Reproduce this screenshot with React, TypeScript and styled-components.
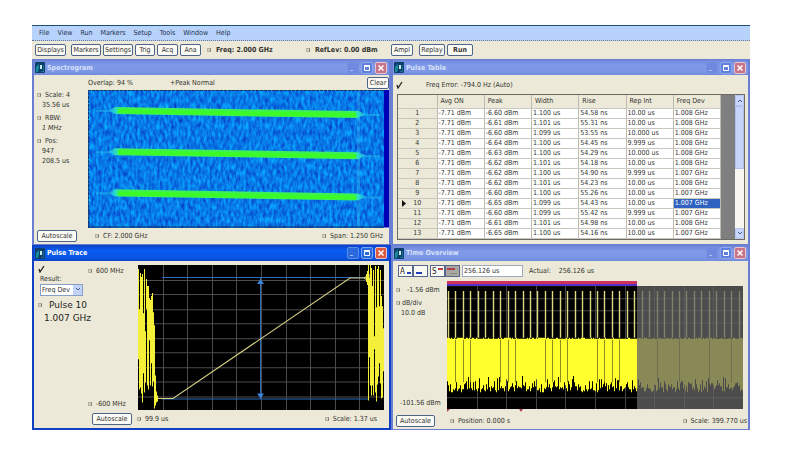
import React from "react";
import styled, { createGlobalStyle, css } from "styled-components";

const GlobalStyle = createGlobalStyle`
  * { box-sizing: border-box; }
  body { margin: 0; background: #fff; }
  body, button, input, select, table {
    font-family: "DejaVu Sans Condensed", "DejaVu Sans", sans-serif;
    font-size: 7px;
    line-height: 10px;
    color: #33332f;
  }
`;

const beige = "#ece9d8";

const Shell = styled.main`
  display: flex;
  flex-direction: column;
  margin: 25px 42px 42px 32px;
  height: calc(100vh - 67px);
  min-height: 405px;
  background: ${beige};
  border-top: 1px solid #1d4f70;
`;

const MenuBar = styled.nav`
  display: flex;
  align-items: center;
  flex: none;
  gap: 8px;
  height: 15px;
  padding-left: 7px;
  background: #b8d3fb;
  border-bottom: 1px dotted #68758c;
`;

const MenuItem = styled.button`
  padding: 0;
  border: 0;
  background: none;
  color: #1f2f4c;
`;

const Toolbar = styled.div`
  display: flex;
  align-items: center;
  flex: none;
  height: 18px;
  padding-left: 3px;
`;

const ToolGroup = styled.div<{ $before?: number }>`
  display: flex;
  gap: 2px;
  margin-left: ${(p) => p.$before ?? 0}px;
`;

const PushButton = styled.button<{ $width: number; $bold?: boolean }>`
  width: ${(p) => p.$width}px;
  height: 12px;
  padding: 0;
  border: 1px solid #4d6489;
  border-radius: 2px;
  background: #fbfaf5;
  line-height: 10px;
  white-space: nowrap;
  flex: none;
  font-weight: ${(p) => (p.$bold ? 700 : 400)};
`;

const Readout = styled.div<{ $width: number }>`
  display: flex;
  align-items: center;
  gap: 5px;
  width: ${(p) => p.$width}px;
  font-weight: 700;
  white-space: nowrap;
`;

const Workspace = styled.div`
  flex: 1;
  min-height: 0;
  display: grid;
  grid-template-columns: 1fr 1fr;
  grid-template-rows: 1fr 1fr;
`;

const Pane = styled.section<{ $active?: boolean }>`
  display: flex;
  flex-direction: column;
  min-width: 0;
  min-height: 0;
  background: ${beige};
  border: 2px solid ${(p) => (p.$active ? "#1040c4" : "#6a7fd2")};
  border-top-width: 1px;
  border-bottom-width: ${(p) => (p.$active ? 2 : 1)}px;
`;

const TitleBar = styled.header<{ $active?: boolean }>`
  display: flex;
  align-items: center;
  flex: none;
  gap: 2px;
  height: 15px;
  padding: 0 2px 0 1px;
  color: ${(p) => (p.$active ? "#fff" : "#d6e0fa")};
  background: ${(p) =>
    p.$active
      ? "linear-gradient(#0b49d0, #0a5cf0 30%, #0755e6 80%, #0a43c0)"
      : "linear-gradient(#6f88dc, #809ae8 35%, #7c97e6 80%, #7089da)"};
`;

const Title = styled.h2`
  flex: 1;
  margin: 0;
  font-size: 7px;
  line-height: 12px;
  font-weight: 700;
`;

type Tone = "minimize" | "maximize" | "close";

const captionFill = (tone: Tone, active?: boolean) => {
  if (tone === "close") return active ? "#dc5a3c" : "#c67486";
  if (tone === "minimize") return active ? "#2a68de" : "#7089e0";
  return active ? "#2a68de" : "#5f80dc";
};

const captionEdge = (tone: Tone, active?: boolean) => {
  if (tone === "close") return "#e9c3cf";
  if (tone === "minimize") return active ? "#5c8ce8" : "#7790e2";
  return active ? "#7ba4ee" : "#8ea6ea";
};

const CaptionButton = styled.button<{ $tone: Tone; $active?: boolean }>`
  width: 12px;
  height: 12px;
  padding: 0;
  display: grid;
  place-items: center;
  border: 1px solid ${(p) => captionEdge(p.$tone, p.$active)};
  border-radius: 2px;
  background: ${(p) => captionFill(p.$tone, p.$active)};
`;

const Mark = styled.span`
  display: inline-block;
  flex: none;
  width: 4px;
  height: 4px;
  border: 1px solid #b5b2a4;
  border-right-color: #7f7c72;
  background: #d7d3c2;
`;

function Caption({ title, active }: { title: string; active?: boolean }) {
  return (
    <TitleBar $active={active}>
      <svg width="10" height="11" viewBox="0 0 10 11" aria-hidden="true">
        <rect width="10" height="11" rx="1" fill="#0c3f6c" />
        <path d="M1 10V5l3-3v4l-1 4z" fill="#1a8c98" />
        <path d="M5 3h2v4H5z" fill="#c9eef0" />
        <path d="M8 3h1v7H6V9h2z" fill="#18708c" />
      </svg>
      <Title>{title}</Title>
      <CaptionButton $tone="minimize" $active={active} aria-label="Minimize">
        <svg width="8" height="8"><path d="M1 6.5h3" stroke="#a9c0f5" /></svg>
      </CaptionButton>
      <CaptionButton $tone="maximize" $active={active} aria-label="Maximize">
        <svg width="8" height="8">
          <path d="M1.500 2.500h5v4h-5z" fill="none" stroke="#fff" />
          <path d="M1 1.500h6" stroke="#fff" />
        </svg>
      </CaptionButton>
      <CaptionButton $tone="close" $active={active} aria-label="Close">
        <svg width="8" height="8"><path d="M1.500 1.500l5 5m0-5l-5 5" stroke="#fff" strokeWidth="1.500" /></svg>
      </CaptionButton>
    </TitleBar>
  );
}

const Body = styled.div`
  flex: 1;
  min-height: 0;
  display: flex;
`;

const Column = styled.div<{ $right?: number }>`
  flex: 1;
  min-width: 0;
  min-height: 0;
  display: flex;
  flex-direction: column;
  padding-right: ${(p) => p.$right ?? 0}px;
`;

const Plot = styled.svg`
  display: block;
  flex: 1 1 0;
  min-height: 0;
  width: 100%;
`;

const Strip = styled.div<{ $height: number }>`
  display: flex;
  align-items: center;
  flex: none;
  height: ${(p) => p.$height}px;
  white-space: nowrap;
`;

const Footer = styled(Strip)<{ $left: number; $right: number; $gap: number }>`
  gap: ${(p) => p.$gap}px;
  padding: 0 ${(p) => p.$right}px 0 ${(p) => p.$left}px;
`;

const Tagged = styled.span<{ $push?: boolean; $gap?: number }>`
  display: flex;
  align-items: center;
  gap: ${(p) => p.$gap ?? 4}px;
  white-space: nowrap;
  ${(p) => p.$push && css`margin-left: auto;`}
`;

const Side = styled.aside<{ $width: number; $top: number }>`
  flex: none;
  width: ${(p) => p.$width}px;
  padding: ${(p) => p.$top}px 0 0 3px;
  white-space: nowrap;
`;

const Setting = styled.div`
  margin-bottom: 3px;
  & > p { margin: 0 0 0 5px; }
`;

const Check = () => (
  <svg width="7" height="8" viewBox="0 0 7 8" aria-label="Valid">
    <path d="M1 4l1 3L6 1" fill="none" stroke="#222" strokeWidth="1.300" />
  </svg>
);

/* ---------- Spectrogram ---------- */

const SpecStrip = styled(Strip)`
  gap: 37px;
  & > button { margin-left: auto; }
`;

function Spectrogram() {
  return (
    <Pane>
      <Caption title="Spectrogram" />
      <Body>
        <Side $width={54} $top={15}>
          <Setting><Tagged><Mark />Scale: 4</Tagged><p>35.56 us</p></Setting>
          <Setting><Tagged><Mark />RBW:</Tagged><p><i>1 MHz</i></p></Setting>
          <Setting><Tagged><Mark />Pos:</Tagged><p>947</p><p>208.5 us</p></Setting>
        </Side>
        <Column>
          <SpecStrip $height={15}>
            <span>Overlap: 94 %</span>
            <span>+Peak Normal</span>
            <PushButton $width={22}>Clear</PushButton>
          </SpecStrip>
          <Plot viewBox="0 0 301 137" preserveAspectRatio="none" role="img" aria-label="Spectrogram plot">
            <defs>
              <filter id="grain" x="0" y="0" width="100%" height="100%" colorInterpolationFilters="sRGB">
                <feTurbulence type="fractalNoise" baseFrequency="0.36 0.15" numOctaves="2" seed="4" />
                <feColorMatrix values="0 0 0 0 0.03  0 0.65 0 0 0.15  0 0.35 0 0 0.73  0 0 0 0 1" />
              </filter>
              <linearGradient id="sweep">
                <stop offset="0" stopColor="#20c0f0" stopOpacity="0.2" />
                <stop offset="0.03" stopColor="#2be0c0" />
                <stop offset="0.05" stopColor="#3df05a" />
                <stop offset="0.95" stopColor="#3df05a" />
                <stop offset="0.97" stopColor="#2be0c0" />
                <stop offset="1" stopColor="#20c0f0" stopOpacity="0.5" />
              </linearGradient>
            </defs>
            <rect width="301" height="137" fill="#0000b4" />
            <rect width="296" height="137" filter="url(#grain)" />
            <path d="M269 0h3v137h-3z" fill="#3fb2f0" opacity="0.300" />
            {[20, 61, 102].map((y) => (
              <g key={y}>
                <path d={`M8 ${y}h20v2H8zM268 ${y + 4}h24v2h-24z`} fill="#27c5ee" opacity="0.450" />
                <path d={`M20 ${y}L27 ${y - 3}L270 ${y + 1}L278 ${y + 4}L270 ${y + 8}L27 ${y + 4}Z`} fill="url(#sweep)" />
                <path d={`M30 ${y + 1}L268 ${y + 5}`} stroke="#3cfa28" strokeWidth="4" />
              </g>
            ))}
            <path d="M0.500 137V0.500H296" fill="none" stroke="#18365c" strokeDasharray="3 1" />
            <path d="M0 136.500H296" stroke="#12305c" />
          </Plot>
        </Column>
      </Body>
      <Footer $height={16} $left={3} $right={6} $gap={18}>
        <PushButton $width={40}>Autoscale</PushButton>
        <Tagged><Mark />CF: 2.000 GHz</Tagged>
        <Tagged $push><Mark />Span: 1.250 GHz</Tagged>
      </Footer>
    </Pane>
  );
}

/* ---------- Pulse table ---------- */

const TableFrame = styled.div`
  flex: 1;
  min-height: 0;
  display: flex;
  margin: 0 3px 4px 4px;
  background: #7f7f7f;
  border: 1px solid #6c6a62;
  overflow: hidden;
`;

const TableFill = styled.div`
  flex: 1;
  padding-right: 14px;
`;

const Grid = styled.table`
  width: 100%;
  table-layout: fixed;
  border-collapse: collapse;
  background: #fff;
  th, td {
    height: 10px;
    padding: 0 0 0 1px;
    line-height: 9px;
    text-align: left;
    font-weight: 400;
    white-space: nowrap;
    border-right: 1px solid #bdbbb1;
    border-bottom: 1px solid #c9c7be;
  }
  th { background: ${beige}; }
  thead th { height: 13px; padding-left: 3px; }
  th:first-child { width: 39px; text-align: center; padding: 0; }
`;

const Cell = styled.td<{ $selected?: boolean }>`
  ${(p) => p.$selected && css`background: #2f62c0; color: #fff;`}
`;

const Pointer = styled.svg`
  float: left;
  margin: 1px -8px 0 4px;
`;

const ScrollBar = styled.div`
  width: 9px;
  display: flex;
  flex-direction: column;
  background: #f7f6f0;
`;

const ScrollThumb = styled.div`
  flex: 0 0 44%;
  border: 1px solid #aebfec;
  background: #c6d4fa;
`;

const ScrollSpace = styled.div`
  flex: 1;
`;

const ScrollButton = styled.button`
  height: 11px;
  padding: 0;
  border: 1px solid #b4c5f0;
  border-radius: 1px;
  background: #c8d7fb;
  display: grid;
  place-items: center;
`;

const TableStrip = styled(Strip)`
  padding-left: 3px;
  gap: 23px;
`;

const columns = ["Avg ON", "Peak", "Width", "Rise", "Rep Int", "Freq Dev"];
const pulses: string[][] = [
  ["-6.60", "1.100", "54.58", "10.00", "1.008"],
  ["-6.61", "1.101", "55.31", "10.00", "1.008"],
  ["-6.60", "1.099", "53.55", "10.000", "1.008"],
  ["-6.64", "1.100", "54.45", "9.999", "1.008"],
  ["-6.63", "1.100", "54.29", "10.000", "1.008"],
  ["-6.62", "1.101", "54.18", "10.00", "1.008"],
  ["-6.62", "1.100", "54.90", "9.999", "1.007"],
  ["-6.62", "1.101", "54.23", "10.00", "1.008"],
  ["-6.60", "1.100", "55.26", "10.00", "1.007"],
  ["-6.65", "1.099", "54.43", "10.00", "1.007"],
  ["-6.60", "1.099", "55.42", "9.999", "1.007"],
  ["-6.61", "1.101", "54.98", "10.00", "1.008"],
  ["-6.65", "1.100", "54.16", "10.00", "1.007"],
];
const units = ["dBm", "us", "ns", "us", "GHz"];

function PulseTable() {
  return (
    <Pane>
      <Caption title="Pulse Table" />
      <TableStrip $height={19}>
        <Check />
        <span>Freq Error: -794.0 Hz (Auto)</span>
      </TableStrip>
      <TableFrame>
        <TableFill>
          <Grid>
            <thead>
              <tr><th aria-label="Pulse" />{columns.map((c) => <th key={c} scope="col">{c}</th>)}</tr>
            </thead>
            <tbody>
              {pulses.map((row, i) => (
                <tr key={i}>
                  <th scope="row">
                    {i === 9 && <Pointer width="4" height="7"><path d="M0 0l4 3.500L0 7z" fill="#111" /></Pointer>}
                    {i + 1}
                  </th>
                  <Cell>-7.71 dBm</Cell>
                  {row.map((v, j) => (
                    <Cell key={j} $selected={i === 9 && j === 4}>{v} {units[j]}</Cell>
                  ))}
                </tr>
              ))}
            </tbody>
          </Grid>
        </TableFill>
        <ScrollBar>
          <ScrollButton aria-label="Scroll up"><svg width="6" height="5"><path d="M1 4l2-2 2 2" fill="none" stroke="#44618f" /></svg></ScrollButton>
          <ScrollThumb />
          <ScrollSpace />
          <ScrollButton aria-label="Scroll down"><svg width="6" height="5"><path d="M1 1l2 2 2-2" fill="none" stroke="#44618f" /></svg></ScrollButton>
        </ScrollBar>
      </TableFrame>
    </Pane>
  );
}

/* ---------- Pulse trace ---------- */

function makeRandom(seed: number) {
  let s = seed;
  return () => {
    s = (s * 16807) % 2147483647;
    return s / 2147483647;
  };
}

function burst(from: number, to: number, top: number, bottom: number, seed: number) {
  const rnd = makeRandom(seed);
  let d = "";
  for (let x = from; x <= to; x += 1) {
    const a = top + rnd() * rnd() * 90;
    const b = bottom - rnd() * rnd() * 90;
    d += `M${x + 0.5} ${a.toFixed(0)}V${b.toFixed(0)}`;
  }
  return d;
}

const TraceSide = styled.aside`
  flex: none;
  width: 104px;
  display: grid;
  grid-template-columns: 50px 1fr;
  padding: 4px 0 0 4px;
  white-space: nowrap;
`;

const ResultBox = styled.div`
  display: flex;
  flex-direction: column;
  align-items: flex-start;
`;

const ResultLabel = styled.label`
  margin: 1px 0 0 2px;
`;

const AxisLabels = styled.div`
  display: flex;
  flex-direction: column;
  justify-content: space-between;
  padding: 1px 0 1px;
`;

const PulseReadout = styled.div`
  font-size: 9px;
  line-height: 13px;
  margin-top: 3px;
  font-family: "DejaVu Sans", sans-serif;
  color: #1f1f1c;
  & > p { margin: 0 0 0 6px; }
`;

const ResultSelect = styled.select`
  appearance: none;
  width: 43px;
  height: 12px;
  padding: 0 0 0 1px;
  border: 1px solid #86a0c8;
  border-radius: 0;
  background: linear-gradient(#c2d2f8, #c2d2f8) right / 9px 100% no-repeat #fff;
`;

const SelectWrap = styled.div`
  display: grid;
  align-items: center;
  margin-left: 2px;
  & > * { grid-area: 1 / 1; }
  & > svg { justify-self: end; margin-right: 2px; pointer-events: none; }
`;

function PulseTrace() {
  return (
    <Pane $active>
      <Caption title="Pulse Trace" active />
      <Body>
        <TraceSide>
          <ResultBox>
            <Check />
            <ResultLabel htmlFor="result">Result:</ResultLabel>
            <SelectWrap>
              <ResultSelect id="result" defaultValue="Freq Dev"><option>Freq Dev</option></ResultSelect>
              <svg width="6" height="5"><path d="M1 1l2 2 2-2" fill="none" stroke="#44618f" /></svg>
            </SelectWrap>
            <PulseReadout>
              <Tagged $gap={7}><Mark />Pulse 10</Tagged>
              <p>1.007 GHz</p>
            </PulseReadout>
          </ResultBox>
          <AxisLabels>
            <Tagged><Mark />600 MHz</Tagged>
            <Tagged><Mark />-600 MHz</Tagged>
          </AxisLabels>
        </TraceSide>
        <Column $right={5}>
          <Strip $height={4} />
          <Plot viewBox="0 0 246 145" preserveAspectRatio="none" role="img" aria-label="Frequency deviation trace">
            <rect width="246" height="145" fill="#000" />
            <g stroke="#4c4c4c" fill="none">
              {[1, 2, 3, 4, 5, 6, 7, 8, 9].map((i) => (
                <path key={i} d={`M${Math.round(i * 24.6)}.5 0V145M0 ${Math.round(i * 14.5)}.5H246`} />
              ))}
            </g>
            <path d="M24 12.500H230M24 133.500H230M122.500 13V133" stroke="#2c6cba" fill="none" />
            <path d="M119 19l3.500-5 3.500 5zM119 128l3.500 5 3.500-5z" fill="#3985dd" />
            <path d="M17 131l3 2h15L212 13h14l5-3v6l-5-3" fill="none" stroke="#d6cf86" strokeWidth="1.100" />
            <path d={burst(0, 7, 4, 144, 91) + burst(8, 15, 14, 128, 37) + "M16.500 60V143M17.500 110V140M18.500 126V137M19.500 130V136"} stroke="#f4f03a" fill="none" />
            <path d={burst(230, 245, 0, 136, 53) + "M229.500 6V20M228.500 9V17"} stroke="#f4f03a" fill="none" />
          </Plot>
        </Column>
      </Body>
      <Footer $height={18} $left={58} $right={12} $gap={5}>
        <PushButton $width={40}>Autoscale</PushButton>
        <Tagged><Mark />99.9 us</Tagged>
        <Tagged $push><Mark />Scale: 1.37 us</Tagged>
      </Footer>
    </Pane>
  );
}

/* ---------- Time overview ---------- */

const OverviewBar = styled(Strip)`
  padding: 0 0 0 5px;
  gap: 2px;
`;

const TogglePair = styled.div`
  display: flex;
`;

const ModeButton = styled.button<{ $pressed?: boolean }>`
  width: 15px;
  height: 12px;
  padding: 0;
  border: 1px solid #54678e;
  background: ${(p) => (p.$pressed ? "#aaa7a0" : "#faf9f4")};
  & > svg { display: block; }
`;

const LengthInput = styled.input`
  width: 61px;
  height: 12px;
  padding: 0 1px;
  border: 1px solid #9cabc0;
  background: #fff;
`;

const Actual = styled.dl`
  display: flex;
  gap: 8px;
  margin: 0 0 0 4px;
  & > dd { margin: 0; }
`;

const OverviewSide = styled.aside`
  flex: none;
  width: 54px;
  display: flex;
  flex-direction: column;
  padding: 4px 0 0 3px;
  white-space: nowrap;
`;

const BottomLevel = styled.span`
  margin: auto 0 4px 4px;
`;

const ticks = Array.from({ length: 40 }, (_, i) => Math.round(i * 7.45) + 1);
const dropouts = [1, 2, 3, 7, 8, 9, 13, 14, 15, 16, 20, 21, 22, 23, 28, 31, 35, 38];

function overviewBand() {
  const rnd = makeRandom(77);
  let d = "";
  for (let x = 0; x < 296; x += 1) {
    const top = 56 + Math.round(rnd() * 1.4);
    const deep = 93 + Math.round(Math.sqrt(rnd()) * 17);
    d += `M${x + 0.5} ${top}V${deep}`;
  }
  return d;
}

function TimeOverview() {
  return (
    <Pane>
      <Caption title="Time Overview" />
      <OverviewBar $height={20}>
        <TogglePair>
          <ModeButton aria-label="Analysis start"><svg width="13" height="10"><text x="1" y="8" fontSize="8" fill="#222">A</text><path d="M8 7h4" stroke="#2340b5" strokeWidth="2" /></svg></ModeButton>
          <ModeButton aria-label="Analysis length"><svg width="13" height="10"><path d="M2 7h6" stroke="#2340b5" strokeWidth="2" /></svg></ModeButton>
        </TogglePair>
        <TogglePair>
          <ModeButton aria-label="Spectrum start"><svg width="13" height="10"><text x="1" y="8" fontSize="8" fill="#222">S</text><path d="M7 3h5" stroke="#c33c4c" strokeWidth="2" /></svg></ModeButton>
          <ModeButton $pressed aria-label="Spectrum length"><svg width="13" height="10"><path d="M1 3h8" stroke="#b43c4c" strokeWidth="2" /><path d="M4 7.500h7" stroke="#8c8a84" /></svg></ModeButton>
        </TogglePair>
        <LengthInput aria-label="Analysis length" defaultValue="256.126 us" />
        <Actual><dt>Actual:</dt><dd>256.126 us</dd></Actual>
      </OverviewBar>
      <Body>
        <OverviewSide>
          <Setting><Tagged $gap={7}><Mark />-1.56 dBm</Tagged></Setting>
          <Setting><Tagged $gap={2}><Mark />dB/div</Tagged><p>10.0 dB</p></Setting>
          <BottomLevel>-101.56 dBm</BottomLevel>
        </OverviewSide>
        <Column $right={5}>
          <Plot viewBox="0 0 296 127" preserveAspectRatio="none" role="img" aria-label="Amplitude over time">
            <rect width="296" height="127" fill={beige} />
            <rect y="5" width="296" height="122" fill="#000" />
            <path d="M0 17.500H296M0 29.500H296M0 41.500H296M0 115.500H296M30.500 5V127M59.500 5V127M89.500 5V127M118.500 5V127M148.500 5V127M178.500 5V127M207.500 5V127M237.500 5V127M266.500 5V127" stroke="#444" />
            <path d={ticks.map((x) => `M${x}.5 10V56`).join("")} stroke="#dcd980" strokeWidth="1.400" />
            <path d={overviewBand()} stroke="#ffff2e" />
            <path d={dropouts.map((i) => `M${ticks[i]}.5 58V100`).join("")} stroke="#8f8d20" />
            <rect x="190" y="5" width="106" height="122" fill="#646464" opacity="0.760" />
            <path d="M0 1.500H190" stroke="#cf315b" strokeWidth="3" />
            <path d="M0 4H190" stroke="#5430c4" strokeWidth="2" />
          </Plot>
          <Strip $height={3}>
            <svg width="80" height="3"><path d="M0 3V0h3M72 0l2 3 2-3z" fill="#b3424e" /></svg>
          </Strip>
        </Column>
      </Body>
      <Footer $height={17} $left={3} $right={1} $gap={15}>
        <PushButton $width={39}>Autoscale</PushButton>
        <Tagged><Mark />Position: 0.000 s</Tagged>
        <Tagged $push><Mark />Scale: 399.770 us</Tagged>
      </Footer>
    </Pane>
  );
}

export default function App() {
  return (
    <>
      <GlobalStyle />
      <Shell>
        <MenuBar>
          {["File", "View", "Run", "Markers", "Setup", "Tools", "Window", "Help"].map((m) => (
            <MenuItem key={m}>{m}</MenuItem>
          ))}
        </MenuBar>
        <Toolbar>
          <ToolGroup><PushButton $width={31}>Displays</PushButton></ToolGroup>
          <ToolGroup $before={5}>
            <PushButton $width={30}>Markers</PushButton>
            <PushButton $width={30}>Settings</PushButton>
            <PushButton $width={20}>Trig</PushButton>
            <PushButton $width={21}>Acq</PushButton>
            <PushButton $width={21}>Ana</PushButton>
          </ToolGroup>
          <ToolGroup $before={6}>
            <Readout $width={97}><Mark />Freq: 2.000 GHz</Readout>
            <Readout $width={82}><Mark />RefLev: 0.00 dBm</Readout>
          </ToolGroup>
          <ToolGroup $before={3}><PushButton $width={22}>Ampl</PushButton></ToolGroup>
          <ToolGroup $before={6}>
            <PushButton $width={26}>Replay</PushButton>
            <PushButton $width={26} $bold>Run</PushButton>
          </ToolGroup>
        </Toolbar>
        <Workspace>
          <Spectrogram />
          <PulseTable />
          <PulseTrace />
          <TimeOverview />
        </Workspace>
      </Shell>
    </>
  );
}
